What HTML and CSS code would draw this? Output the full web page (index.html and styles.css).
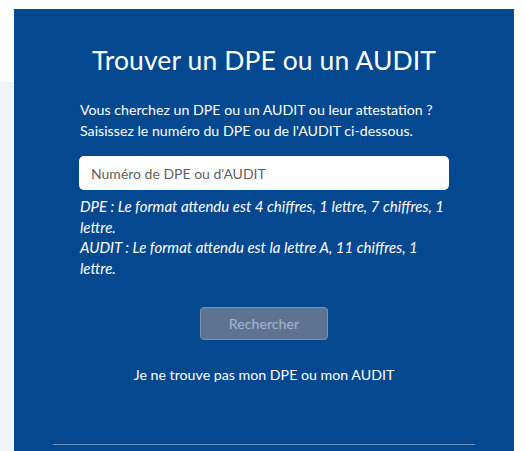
FILE: index.html
```html
<!DOCTYPE html>
<html lang="fr">
<head>
<meta charset="utf-8">
<title>Trouver un DPE ou un AUDIT</title>
<link rel="stylesheet" href="styles.css">
</head>
<body>
<div class="page">
  <div class="side"></div>
  <section class="search-panel">
    <h1 class="title">Trouver un DPE ou un AUDIT</h1>
    <div class="content">
      <p class="intro">Vous cherchez un DPE ou un AUDIT ou leur attestation ?<br>Saisissez le numéro du DPE ou de l'AUDIT ci-dessous.</p>
      <input class="field" type="text" placeholder="Numéro de DPE ou d'AUDIT">
      <p class="hint">DPE : Le format attendu est 4 chiffres, 1 lettre, 7 chiffres, 1 lettre.<br>AUDIT : Le format attendu est la lettre A, 11 chiffres, 1 lettre.</p>
      <div class="actions">
        <button class="btn" type="button" disabled>Rechercher</button>
      </div>
      <a class="link" href="#">Je ne trouve pas mon DPE ou mon AUDIT</a>
    </div>
    <hr class="divider">
  </section>
</div>
</body>
</html>
```

FILE: styles.css
```css
html, body {
  margin: 0;
  padding: 0;
  background: #ffffff;
  height: 100%;
  overflow: hidden;
}

body {
  font-family: Lato, "Noto Sans", sans-serif;
  color: #ffffff;
}

.page {
  display: flex;
  align-items: stretch;
  height: 451px;
}

.side {
  width: 14px;
  margin-top: 82px;
  background: #f0f3f7;
}

.search-panel {
  width: 500px;
  margin-top: 9px;
  background: #04488f;
  display: flex;
  flex-direction: column;
  align-items: center;
  padding-top: 35px;
  box-sizing: border-box;
}

.title {
  margin: 0;
  font-size: 26.5px;
  font-weight: 400;
  line-height: 32px;
  letter-spacing: 0.1px;
}

.content {
  width: 370px;
  margin-top: 23px;
  display: flex;
  flex-direction: column;
}

.intro {
  margin: 0 0 0 1px;
  font-size: 14.2px;
  line-height: 21px;
}

.field {
  margin-top: 15px;
  height: 34px;
  box-sizing: border-box;
  border: 0;
  border-radius: 5px;
  background: #ffffff;
  padding: 0 12px;
  font-family: inherit;
  font-size: 14px;
  color: #333;
}

.field::placeholder {
  color: #5f5f5f;
}

.hint {
  margin: 6px 0 0 1px;
  font-size: 15px;
  font-style: italic;
  line-height: 20.5px;
}

.actions {
  display: flex;
  justify-content: center;
  margin-top: 29px;
}

.btn {
  width: 128px;
  height: 33px;
  border: 1.5px solid #7f93b0;
  border-radius: 4px;
  background: #5e738f;
  color: #a8b8cf;
  font-family: inherit;
  font-size: 14.2px;
}

.link {
  align-self: center;
  margin-top: 25px;
  color: #ffffff;
  text-decoration: none;
  font-size: 14.2px;
  line-height: 20px;
}

.divider {
  width: 422px;
  margin: 59px 0 0 0;
  border: 0;
  border-top: 1px solid #6f8fbd;
}
```
